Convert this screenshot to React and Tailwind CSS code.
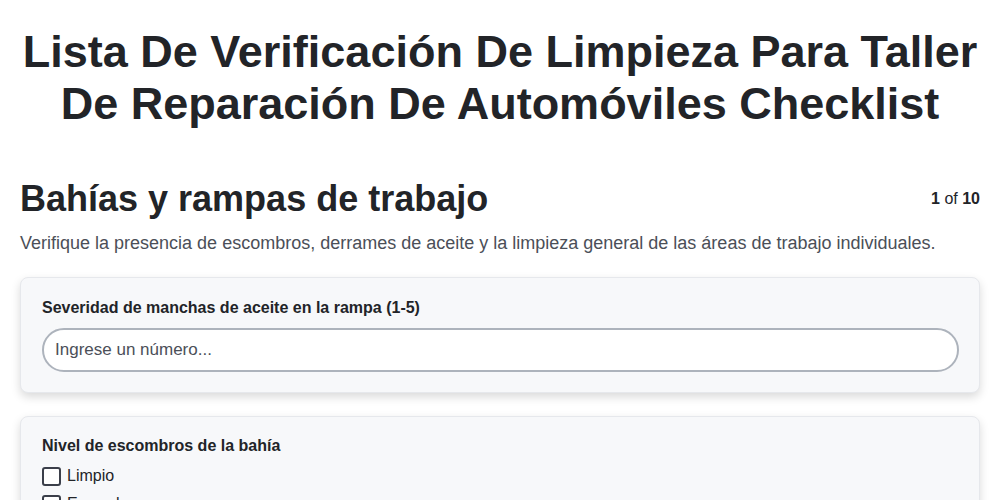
import React from 'react';

const options = ['Limpio', 'Escombros menores', 'Escombros moderados', 'Escombros abundantes'];

export default function App() {
  return (
    <div className="min-h-screen bg-white text-[#222428]" style={{ fontFamily: '"Liberation Sans", Arial, sans-serif' }}>
      <div className="px-5 pt-[26px]">
        <h1 className="text-center text-[45px] font-bold leading-[52px] text-[#222428]">
          Lista De Verificación De Limpieza Para Taller De Reparación De Automóviles Checklist
        </h1>

        <div className="mt-[47px] flex items-center justify-between">
          <h2 className="text-[36px] font-bold leading-[44px]">Bahías y rampas de trabajo</h2>
          <div className="text-[16px] text-[#222428]">
            <span className="font-bold">1</span> of <span className="font-bold">10</span>
          </div>
        </div>
        <p className="mt-[10px] text-[18px] leading-[24px] text-[#4b4f58]">
          Verifique la presencia de escombros, derrames de aceite y la limpieza general de las áreas de trabajo individuales.
        </p>

        <div className="mt-[22px] flex flex-col gap-[23px]">
          <div className="rounded-lg border border-[#e6e8ec] bg-[#f7f8fa] pl-[21px] pr-5 pt-[19px] pb-[20px] shadow-[0_4px_10px_rgba(0,0,0,0.15)]">
            <label className="block text-[16px] font-bold leading-[22px] text-[#222428]">
              Severidad de manchas de aceite en la rampa (1-5)
            </label>
            <input
              type="text"
              placeholder="Ingrese un número..."
              className="mt-[9px] h-[44px] w-full rounded-[22px] border-2 border-[#adb3bc] bg-white px-[11px] text-[17px] text-[#222428] placeholder:text-[#4b4f58] outline-none"
            />
          </div>

          <div className="rounded-lg border border-[#e6e8ec] bg-[#f7f8fa] pl-[21px] pr-5 pt-[18px] pb-[20px] shadow-[0_4px_10px_rgba(0,0,0,0.15)]">
            <div className="text-[16px] font-bold leading-[22px] text-[#222428]">Nivel de escombros de la bahía</div>
            <div className="mt-[9px] flex flex-col gap-[8px]">
              {options.map((o) => (
                <label key={o} className="flex items-center gap-[6px] text-[16px] leading-[20px]">
                  <span className="inline-block h-[19px] w-[19px] rounded-[3px] border-2 border-[#3b3f4a] bg-white"></span>
                  {o}
                </label>
              ))}
            </div>
          </div>
        </div>
      </div>
    </div>
  );
}
